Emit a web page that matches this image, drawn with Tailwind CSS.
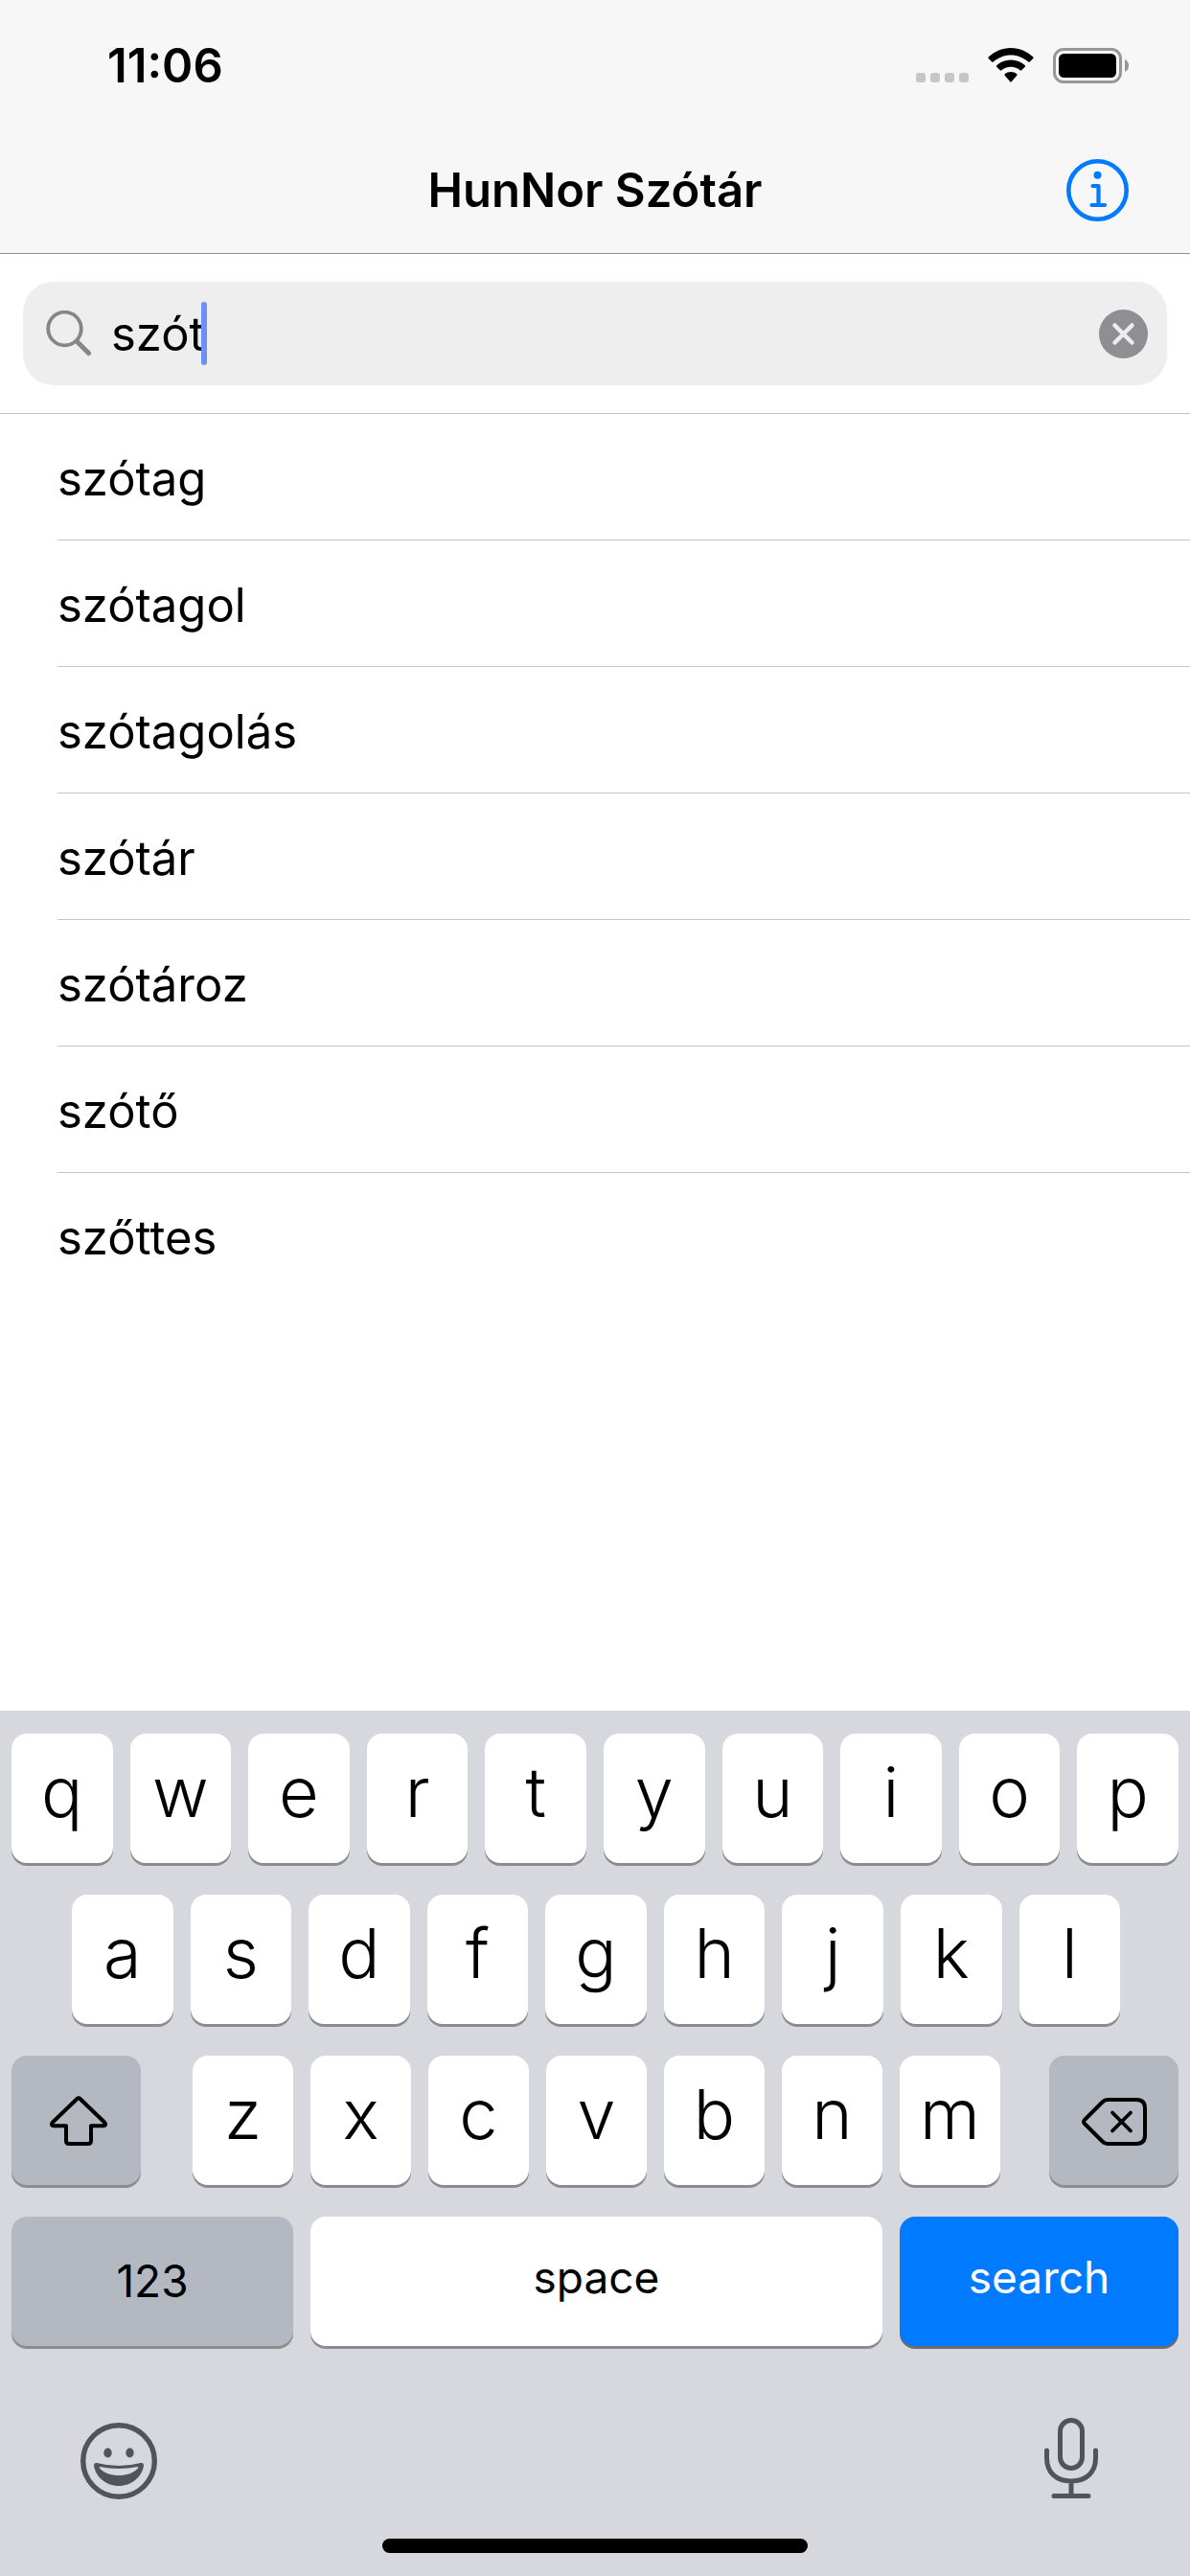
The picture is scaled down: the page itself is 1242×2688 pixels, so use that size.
<!DOCTYPE html>
<html lang="hu">
<head>
<meta charset="utf-8">
<meta name="viewport" content="width=device-width, initial-scale=1">
<title>HunNor Szótár</title>
<script src="https://cdn.jsdelivr.net/npm/@tailwindcss/browser@4"></script>
</head>
<body class="flex min-h-screen flex-col bg-white font-['Inter',sans-serif] text-[49px] leading-none text-black">
<header class="border-b border-[#909090] bg-[#f7f7f7]">
  <div class="flex h-[132px] items-center justify-between pt-1 pr-16 pl-28">
    <time class="font-semibold">11:06</time>
    <div class="flex items-center">
      <svg class="h-[37px] w-[55px]" viewBox="0 0 55 37" fill="#c6c6c6" aria-hidden="true"><rect x="0" y="26" width="10" height="10" rx="3"/><rect x="15" y="26" width="10" height="10" rx="3"/><rect x="30" y="26" width="10" height="10" rx="3"/><rect x="45" y="26" width="10" height="10" rx="3"/></svg>
      <svg class="ml-5 h-[37px] w-12" viewBox="0 0 48 37" aria-hidden="true"><path d="M24 0C33 0 41 3.500 47.300 9.600Q48 10.300 47.300 11L43.700 14.600Q43 15.200 42.300 14.600C37.300 10 31 7.400 24 7.400S10.700 10 5.700 14.600Q5 15.200 4.300 14.600L.7 11Q0 10.300.7 9.600C7 3.500 15 0 24 0ZM24 12.600C29.700 12.600 34.800 14.700 38.800 18.300Q39.500 19 38.800 19.700L35.200 23.300Q34.500 24 33.700 23.300C31.100 21.100 27.700 19.800 24 19.800S16.900 21.100 14.300 23.300Q13.500 24 12.800 23.300L9.200 19.700Q8.500 19 9.200 18.300C13.200 14.700 18.300 12.600 24 12.600ZM24 25C26.400 25 28.600 25.900 30.300 27.300Q31 28 30.300 28.800L24.700 35.300Q24 36 23.300 35.300L17.700 28.800Q17 28 17.700 27.300C19.400 25.900 21.600 25 24 25Z"/></svg>
      <svg class="ml-5 h-[37px] w-[79px]" viewBox="0 0 79 37" aria-hidden="true"><rect x="1.500" y="1.500" width="69" height="34" rx="9.500" fill="none" stroke="#979797" stroke-width="3"/><rect x="6" y="6" width="60" height="25" rx="5.500"/><path d="M75 12C77.500 13 79 15.500 79 18.500S77.500 24 75 25Z" fill="#979797"/></svg>
    </div>
  </div>
  <div class="grid h-[132px] grid-cols-[1fr_auto_1fr] items-center px-16">
    <h1 class="col-start-2 font-semibold">HunNor Szótár</h1>
    <button type="button" aria-label="Info" class="justify-self-end">
      <svg class="block h-[65px] w-[65px]" viewBox="0 0 65 65" fill="none" stroke="#007aff" stroke-linecap="round" stroke-linejoin="round" aria-hidden="true"><circle cx="32.500" cy="32.500" r="30.200" stroke-width="4.600"/><path d="M27.500 28H33.500V48M26.500 48H40" stroke-width="4.200"/><circle cx="32.500" cy="16.700" r="4" fill="#007aff" stroke="none"/></svg>
    </button>
  </div>
</header>
<main class="flex-1">
  <form role="search" class="border-b border-[#c6c6c8] px-6 py-[29px]">
    <div class="flex h-[108px] items-center rounded-[32px] bg-[#eeeeef] pr-5 pl-6">
      <label for="word" class="shrink-0" aria-label="Keresés">
        <svg class="block h-12 w-12" viewBox="0 0 48 48" fill="none" stroke="#86868a" stroke-linecap="round" aria-hidden="true"><circle cx="19.500" cy="19" r="17.300" stroke-width="3.800"/><path d="M32 32L44.500 44.500" stroke-width="5"/></svg>
      </label>
      <input id="word" type="text" value="szót" autocomplete="off" class="field-sizing-content ml-5 bg-transparent pt-0.5 leading-normal outline-none">
      <span class="-ml-1 h-[66px] w-1.5 shrink-0 rounded-full bg-[#708ff5]" aria-hidden="true"></span>
      <button type="reset" aria-label="Törlés" class="ml-auto">
        <svg class="block h-[51px] w-[51px]" viewBox="0 0 51 51" aria-hidden="true"><circle cx="25.500" cy="25.500" r="25.500" fill="#8e8e93"/><path d="M16.500 16.500L34.500 34.500M34.500 16.500L16.500 34.500" stroke="#eeeeef" stroke-width="4.500" stroke-linecap="round"/></svg>
      </button>
    </div>
  </form>
  <ul class="divide-y divide-[#c6c6c8] pl-15">
    <li><a href="#szotag" class="flex h-[131px] items-center pt-1">szótag</a></li>
    <li><a href="#szotagol" class="flex h-[131px] items-center pt-1">szótagol</a></li>
    <li><a href="#szotagolas" class="flex h-[131px] items-center pt-1">szótagolás</a></li>
    <li><a href="#szotar" class="flex h-[131px] items-center pt-1">szótár</a></li>
    <li><a href="#szotaroz" class="flex h-[131px] items-center pt-1">szótároz</a></li>
    <li><a href="#szoto" class="flex h-[131px] items-center pt-1">szótő</a></li>
    <li><a href="#szottes" class="flex h-[131px] items-center pt-1">szőttes</a></li>
  </ul>
</main>
<section aria-label="Billentyűzet" class="bg-[#d7d8dd] pt-6">
  <div class="flex flex-col gap-[33px] px-3 text-7xl font-[350]">
    <div class="flex gap-[18px] *:h-[135px] *:min-w-0 *:flex-1 *:rounded-2xl *:bg-white *:pb-3.5 *:shadow-[0_3px_0_#8b8c90]">
      <button type="button">q</button><button type="button">w</button><button type="button">e</button><button type="button">r</button><button type="button">t</button><button type="button">y</button><button type="button">u</button><button type="button">i</button><button type="button">o</button><button type="button">p</button>
    </div>
    <div class="flex gap-[18px] pr-[61px] pl-[63px] *:h-[135px] *:min-w-0 *:flex-1 *:rounded-2xl *:bg-white *:pb-3.5 *:shadow-[0_3px_0_#8b8c90]">
      <button type="button">a</button><button type="button">s</button><button type="button">d</button><button type="button">f</button><button type="button">g</button><button type="button">h</button><button type="button">j</button><button type="button">k</button><button type="button">l</button>
    </div>
    <div class="flex">
      <button type="button" aria-label="Shift" class="grid h-[135px] w-[135px] place-items-center rounded-2xl bg-[#b3b8c1] pl-1 shadow-[0_3px_0_#8b8c90]">
        <svg class="h-[52px] w-[60px]" viewBox="0 0 60 52" fill="none" stroke="#000" stroke-width="4" stroke-linejoin="round" aria-hidden="true"><path d="M28.500 3Q30 1.500 31.500 3L57 27.500Q59.500 31 56 31.200H43V47Q43 50 40 50H20Q17 50 17 47V31.200H4Q.5 31 3 27.500Z"/></svg>
      </button>
      <div class="flex flex-1 gap-[18px] pr-[51px] pl-[54px] *:h-[135px] *:min-w-0 *:flex-1 *:rounded-2xl *:bg-white *:pb-3.5 *:shadow-[0_3px_0_#8b8c90]">
        <button type="button">z</button><button type="button">x</button><button type="button">c</button><button type="button">v</button><button type="button">b</button><button type="button">n</button><button type="button">m</button>
      </div>
      <button type="button" aria-label="Backspace" class="grid h-[135px] w-[135px] place-items-center rounded-2xl bg-[#b3b8c1] pt-0.5 shadow-[0_3px_0_#8b8c90]">
        <svg class="h-[50px] w-[68px]" viewBox="0 0 68 50" fill="none" stroke="#000" stroke-width="4" stroke-linecap="round" stroke-linejoin="round" aria-hidden="true"><path d="M27 2H57Q66 2 66 11V39Q66 48 57 48H27Q24 48 21.500 45.500L3 27Q1 25 3 23L21.500 4.500Q24 2 27 2Z"/><path d="M32 15.500L51 34.500M51 15.500L32 34.500" stroke-width="3.800"/></svg>
      </button>
    </div>
    <div class="grid grid-cols-[294fr_597fr_291fr] gap-[18px] text-[46px] font-normal *:h-[135px] *:rounded-2xl">
      <button type="button" class="bg-[#b3b8c1] pb-0.5 shadow-[0_3px_0_#8b8c90]">123</button>
      <button type="button" class="bg-white pb-2.5 shadow-[0_3px_0_#8b8c90]">space</button>
      <button type="submit" class="bg-[#007aff] pb-2.5 text-white shadow-[0_3px_0_#6b6c70]">search</button>
    </div>
  </div>
  <div class="flex h-[201px] items-center justify-between pt-[38px] pr-24 pl-[84px]">
    <button type="button" aria-label="Emoji">
      <svg class="block h-20 w-20" viewBox="0 0 80 80" fill="#50555c" aria-hidden="true"><circle cx="40" cy="40" r="37.300" fill="none" stroke="#50555c" stroke-width="5.400"/><ellipse cx="28.500" cy="31.500" rx="4.200" ry="5"/><ellipse cx="51.500" cy="31.500" rx="4.200" ry="5"/><path fill-rule="evenodd" d="M17 42Q40 48 63 42Q66 41.500 66 45C64 57 53 66 40 66S16 57 14 45Q14 41.500 17 42ZM20 46Q19.500 46.500 20 47.500C24 52.500 32 55 40 55S56 52.500 60 47.500Q61 46 59.500 46Q40 50 20 46Z"/></svg>
    </button>
    <button type="button" aria-label="Dictation" class="pb-1.5">
      <svg class="block h-[84px] w-14" viewBox="0 0 56 84" fill="none" stroke="#50555c" stroke-width="5" stroke-linecap="round" aria-hidden="true"><rect x="16.500" y="2.500" width="23" height="50" rx="11.500"/><path d="M2.500 34V42C2.500 57 12.500 66 28 66S53.500 57 53.500 42V34M28 66V81M10 81.500H46"/></svg>
    </button>
  </div>
  <div class="mx-auto mb-6 h-[15px] w-[444px] max-w-full rounded-full bg-black"></div>
</section>
</body>
</html>
